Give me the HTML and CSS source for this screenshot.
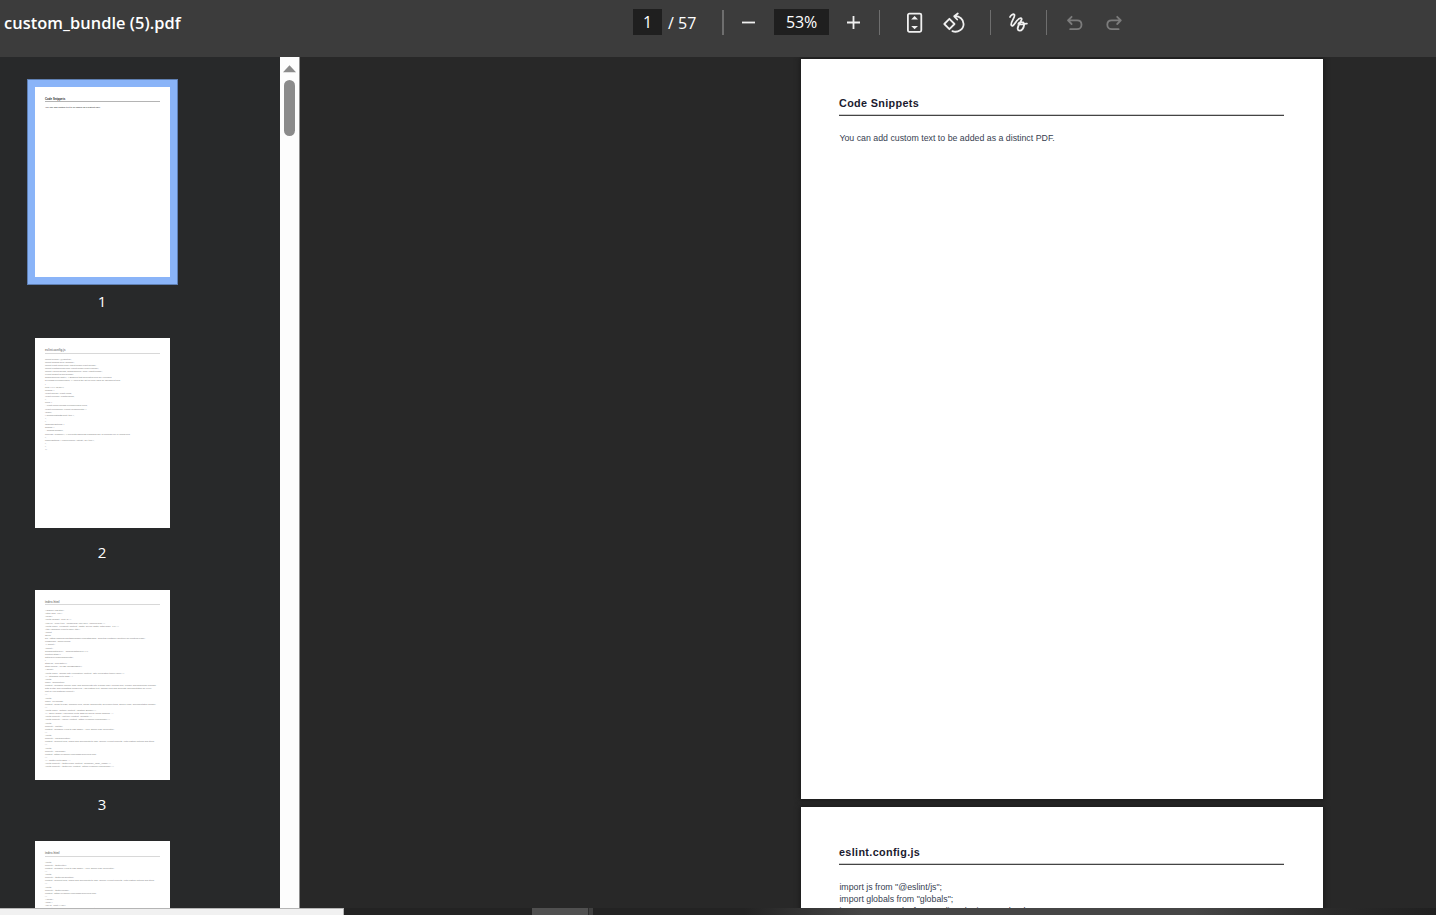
FILE: index.html
```html
<!DOCTYPE html>
<html lang="en">
<head>
    <meta charset="UTF-8">
    <meta name="viewport" content="width=device-width, initial-scale=1.0">
    <title>custom_bundle (5).pdf</title>
    <link rel="stylesheet" href="styles.css">
</head>
<body>
    <header class="toolbar">
        <div class="file-name"><span>custom_bundle (5).pdf</span></div>
        <div class="tools">
            <span class="field page-field">1</span>
            <span class="page-total">/ 57</span>
            <span class="divider wide"></span>
            <svg class="icon zoom-out" viewBox="0 0 20 20"><path d="M4 10.5h13"/></svg>
            <span class="field zoom-field">53%</span>
            <svg class="icon zoom-in" viewBox="0 0 20 20"><path d="M4 10.5h13M10.5 4v13"/></svg>
            <span class="divider"></span>
            <svg class="icon fit" viewBox="0 0 24 24">
                <rect x="4.9" y="3.6" width="13.4" height="18.2" rx="1.5"/>
                <path class="solid" d="M8.2 9.6l3.4-3.5L15 9.6zM8.2 15.9l3.4 3.4 3.4-3.4z"/>
            </svg>
            <svg class="icon rotate" viewBox="0 0 24 24">
                <path d="M7.4 8.8l5.1 5.2-5.1 5.2L2.3 14zM15.8 3.5l-3.6 2.8 3 3.2M12.4 6.2c5.2-.4 9.2 3.2 9.2 7.8 0 5.3-5.6 9.2-11.2 7.1"/>
            </svg>
            <span class="divider after-rotate"></span>
            <svg class="icon draw" viewBox="0 0 24 24">
                <path d="M4 7C4.8 5.2 7.2 3.6 8.3 4.6c1.7 1.8-4.2 7.6-3 10.6 1.8 3.6 5.8-7.8 9.6-7 3 .9-3.8 6.8-3.2 10.6.4 2.6 3.2 2.4 4.8.3 1.8-2.4 2.2-5.8.6-6.7-1.6-.8-4.2.2-4.8 1.6 2.5 1.2 5.5-.6 8.6-.3"/>
            </svg>
            <span class="divider after-draw"></span>
            <svg class="icon undo" viewBox="0 0 24 24"><path d="M8.6 6.8L5 10.4 8.6 14M5.2 10.4h8.9c2.7 0 4.4 1.8 4.4 4.3s-1.8 4.5-4.5 4.5H7.2"/></svg>
            <svg class="icon redo" viewBox="0 0 24 24"><path d="M15.2 6.8l3.6 3.6-3.6 3.6M18.6 10.4H9.7c-2.7 0-4.4 1.8-4.4 4.3s1.8 4.5 4.5 4.5h6.8"/></svg>
        </div>
    </header>

    <main class="viewer">
        <aside class="sidebar">
            <div class="thumb selected">
                <div class="mini">
                    <h3 class="dark">Code Snippets</h3>
                    <pre class="dark">You can add custom text to be added as a distinct PDF.</pre>
                </div>
            </div>
            <div class="label">1</div>
            <div class="thumb">
                <div class="mini">
                    <h3>eslint.config.js</h3>
<pre>import js from "@eslint/js";
import globals from "globals";
import reactHooks from "eslint-plugin-react-hooks";
import reactRefresh from "eslint-plugin-react-refresh";
import { defineConfig, globalIgnores } from "eslint/config";
export default defineConfig([
globalIgnores(["dist"]), // Ensures that generated files are excluded
js.configs.recommended, // Applies the set of rules used for JavaScript files
{
files: ["**/*.{js,jsx}"],
plugins: {
"react-hooks": reactHooks,
"react-refresh": reactRefresh,
},
rules: {
...reactHooks.configs.recommended.rules,
"react-refresh/only-export-components": [
"warn",
{ allowConstantExport: true },
],
},
languageOptions: {
globals: {
...globals.browser,
process: "readonly", // Prevents warnings regarding use of process.env in config files
},
parserOptions: { ecmaVersion: "latest", jsx: true },
},
},
]);</pre>
                </div>
            </div>
            <div class="label">2</div>
            <div class="thumb">
                <div class="mini">
                    <h3>index.html</h3>
<pre>&lt;!DOCTYPE html&gt;
&lt;html lang="en"&gt;
&lt;head&gt;
&lt;meta charset="UTF-8" /&gt;
&lt;link rel="icon" type="image/svg+xml" href="/favicon.svg" /&gt;
&lt;meta name="viewport" content="width=device-width, initial-scale=1.0" /&gt;
&lt;title&gt;Combine Files to PDF&lt;/title&gt;
&lt;script
async
src="https://www.googletagmanager.com/gtag/js?id=analytics-container-identifier-for-frontend-page"
crossorigin="anonymous"
&gt;&lt;/script&gt;
&lt;script&gt;
window.dataLayer = window.dataLayer || [];
function gtag() {
dataLayer.push(arguments);
}
gtag("js", new Date());
gtag("config", "G-MEASUREMENT");
&lt;/script&gt;
&lt;meta name="google-site-verification" content="site-verification-token-value" /&gt;
&lt;!-- Standard Meta Tags --&gt;
&lt;meta
name="description"
content="Combine source code and documents into a single PDF. Upload files, reorder and download a bundle
with syntax and formatting preserved. Add custom text, choose files and generate documentation for every
part of your software project."
/&gt;
&lt;meta
name="keywords"
content="Code to PDF, combine files, merge documents, developer tools, source code, documentation bundle"
/&gt;
&lt;meta name="author" content="Custom Bundle" /&gt;
&lt;!-- Open Graph / Facebook Meta Tags for Social Media Sharing --&gt;
&lt;meta property="og:type" content="website" /&gt;
&lt;meta property="og:url" content="https://example.com/bundle" /&gt;
&lt;meta
property="og:title"
content="Combine Files to PDF Easily - Free Online PDF Generator"
/&gt;
&lt;meta
property="og:description"
content="Convert files, codes and documents to PDF. Quickly export projects. With custom options and titles"
/&gt;
&lt;meta
property="og:image"
content="https://example.com/images/preview.png"
/&gt;
&lt;!-- Twitter Meta Tags --&gt;
&lt;meta property="twitter:card" content="summary_large_image" /&gt;
&lt;meta property="twitter:url" content="https://example.com/bundle" /&gt;</pre>
                </div>
            </div>
            <div class="label">3</div>
            <div class="thumb">
                <div class="mini">
                    <h3>index.html</h3>
<pre>&lt;meta
property="twitter:title"
content="Combine Files to PDF Easily - Free Online PDF Generator"
/&gt;
&lt;meta
property="twitter:description"
content="Convert files, codes and documents to PDF. Quickly export projects. With custom options and titles"
/&gt;
&lt;meta
property="twitter:image"
content="https://example.com/images/preview.png"
/&gt;
&lt;/head&gt;
&lt;body&gt;
&lt;div id="root"&gt;&lt;/div&gt;
&lt;script type="module" src="/src/main.jsx"&gt;&lt;/script&gt;</pre>
                </div>
            </div>
        </aside>
        <div class="scrollbar">
            <svg class="arrow" viewBox="0 0 14 8"><path d="M7 0l7 7.5H0z"/></svg>
            <div class="handle"></div>
        </div>
        <section class="pages">
            <article class="page">
                <h2>Code Snippets</h2>
                <p>You can add custom text to be added as a distinct PDF.</p>
            </article>
            <article class="page second">
                <h2>eslint.config.js</h2>
                <p>import js from "@eslint/js";</p>
                <p>import globals from "globals";</p>
                <p>import reactHooks from "eslint-plugin-react-hooks";</p>
            </article>
        </section>
    </main>

    <footer class="bottom">
        <div class="status"></div>
        <div class="taskbar"></div>
    </footer>
</body>
</html>
```
FILE: styles.css
```css
* {
    box-sizing: border-box;
}
body {
    margin: 0;
    height: 915px;
    display: flex;
    flex-direction: column;
    overflow: hidden;
    background-color: #282828;
    font-family: "Open Sans", "Noto Sans", sans-serif;
    color: #fff;
}

/* toolbar */
.toolbar {
    display: flex;
    flex: none;
    height: 57px;
    background-color: #3c3c3c;
}
.file-name {
    width: 633px;
    padding-left: 4px;
    font-size: 16.4px;
    font-weight: 600;
    line-height: 46px;
    letter-spacing: 0.05px;
    white-space: nowrap;
}
.tools {
    display: flex;
    align-items: center;
    height: 44px;
    font-size: 16px;
}
.field {
    height: 26px;
    line-height: 27px;
    text-align: center;
    background-color: #1f1f1f;
    letter-spacing: -0.1px;
}
.page-field {
    width: 29px;
}
.page-total {
    width: 60px;
    padding: 1px 0 0 6px;
    letter-spacing: 0;
}
.zoom-field {
    width: 55px;
    margin: 0 14px 0 16px;
}
.divider {
    width: 1px;
    height: 25px;
    margin: 1px 0 0 16px;
    background-color: #6e6e6e;
}
.divider.wide {
    width: 2px;
    margin: 1px 14px 0 0;
}
.divider.after-rotate {
    margin-left: 24px;
}
.icon {
    flex: none;
    width: 24px;
    height: 24px;
    fill: none;
    stroke: #f0f0f0;
    stroke-width: 1.8;
    stroke-linecap: round;
    stroke-linejoin: round;
}
.icon .solid {
    fill: #f0f0f0;
    stroke: none;
}
.zoom-out, .zoom-in {
    width: 20px;
    height: 20px;
    stroke-linecap: butt;
}
.fit {
    margin-left: 23px;
}
.rotate {
    margin-left: 15px;
}
.draw {
    margin-left: 15px;
}
.undo {
    margin-left: 16px;
    stroke: #7c7c7c;
}
.redo {
    margin-left: 15px;
    stroke: #7c7c7c;
}

/* thumbnails */
.viewer {
    display: flex;
    height: 851px;
    overflow: hidden;
}
.sidebar {
    width: 280px;
    padding: 29.6px 0 0 35px;
    background-color: #28292a;
}
.thumb {
    width: 135px;
    height: 190px;
    overflow: hidden;
    background-color: #fff;
}
.thumb.selected {
    overflow: visible;
    outline: 7px solid #8ab4f8;
    box-shadow: 0 0 0 8px #5f7fb2;
}
.label {
    width: 134px;
    height: 61.5px;
    padding-top: 13px;
    font-size: 15px;
    line-height: 22px;
    text-align: center;
}
.mini {
    padding: 11px 10px 0;
    font-family: "Liberation Sans", Arial, sans-serif;
    color: #7c7c7c;
}
.mini h3 {
    margin: 0 0 4px;
    border-bottom: 1px solid #d8d8d8;
    font-size: 2.75px;
    line-height: 3.4px;
    letter-spacing: 0.08px;
}
.mini pre {
    margin: 0;
    font-family: inherit;
    font-size: 2.28px;
    line-height: 3.127px;
}
.mini .dark {
    color: #222;
}
.mini h3.dark {
    border-color: #b4b4b4;
}

.scrollbar {
    display: flex;
    flex-direction: column;
    align-items: center;
    width: 20px;
    padding-top: 8px;
    background-color: #fdfdfd;
    border-right: 1px solid #8c8c8c;
}
.arrow {
    width: 13px;
    height: 8px;
    fill: #8b8b8b;
}
.handle {
    width: 11px;
    height: 56px;
    margin-top: 7px;
    border-radius: 6px;
    background-color: #8b8b8b;
}

/* document pages */
.pages {
    flex: 1;
    padding: 2px 0 0 501px;
    background-color: #282828;
}
.page {
    width: 522px;
    height: 740px;
    margin-bottom: 8px;
    padding: 37px 39px 0 38px;
    background-color: #fff;
    box-shadow: 0 0 5px 1px #1a1a1a;
    font-family: "Liberation Sans", Arial, sans-serif;
    color: #374151;
}
.page.second {
    padding-top: 38px;
}
.page h2 {
    margin: 0 0 16px;
    padding-bottom: 5px;
    border-bottom: 1px solid #444;
    box-shadow: inset 0 -1px 0 #ccc;
    font-size: 10.8px;
    line-height: 14px;
    letter-spacing: 0.35px;
    color: #1a1a2e;
}
.page p {
    margin: 0;
    padding-left: 0.4px;
    font-size: 8.8px;
    line-height: 12px;
}

/* strip below the viewer */
.bottom {
    display: flex;
    height: 7px;
}
.status {
    width: 344px;
    background-color: #f1f1f1;
    border-top: 1px solid #b5b5b5;
    border-right: 1px solid #b5b5b5;
}
.taskbar {
    flex: 1;
    background: linear-gradient(to right, #232323 188px, #505050 188px, #505050 244px, #2c2c2c 244px, #2c2c2c 245px, #404040 245px, #404040 249px, #232323 249px, #232323 400px, #464646 520px, #464646 850px, #2a2a2a 990px, #202020);
}
```
